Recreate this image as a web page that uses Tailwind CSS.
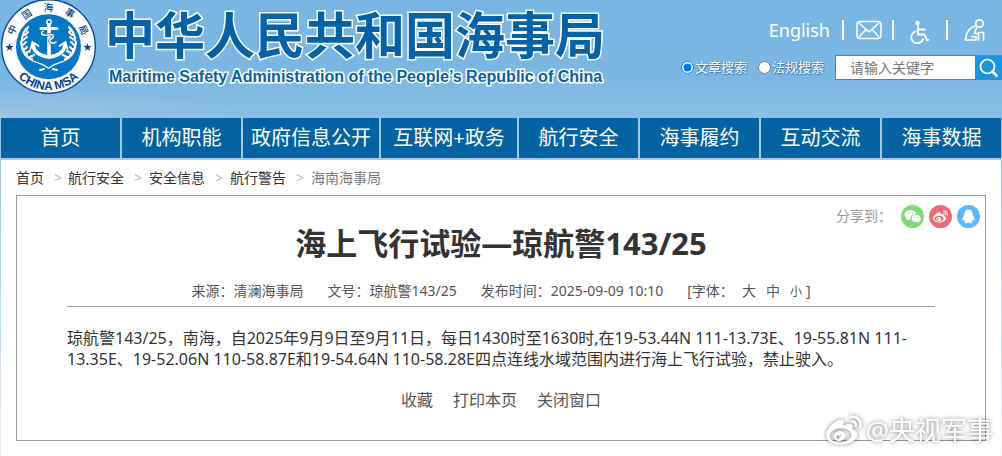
<!DOCTYPE html>
<html lang="zh-CN">
<head>
<meta charset="utf-8">
<meta name="viewport" content="width=device-width, initial-scale=1">
<title>海上飞行试验—琼航警143/25</title>
<script src="https://cdn.jsdelivr.net/npm/@tailwindcss/browser@4"></script>
</head>
<body class="bg-white font-['Noto_Sans','Noto_Sans_CJK_SC',sans-serif] text-[#333]">
<div class="relative min-h-screen bg-linear-to-b from-[#76b4e1] from-0% via-[#a9cfee] via-160px to-[#eeeeee] to-320px px-px">
  <header class="-mx-px flex h-[118px] justify-between bg-[radial-gradient(ellipse_at_0%_100%,#9cc3df_0%,transparent_18%),linear-gradient(180deg,#78b5e2_0%,#7bb6e2_65%,#8abfe6_100%)]">
    <a href="#" class="flex items-start" aria-label="中华人民共和国海事局">
      <svg class="h-24 w-[97px] shrink-0" viewBox="0 0 97 96" aria-hidden="true">
        <defs><path id="arc" d="M5.500 47A43 43 0 0 0 91.500 47"/></defs>
        <circle cx="48.500" cy="46.500" r="46.800" fill="#fff" stroke="#0a4a9c" stroke-width="1.400"/>
        <circle cx="48.500" cy="46.800" r="32.500" fill="#0878c4"/>
        <g fill="#0a3f8f" font-family="Noto Sans CJK SC" font-size="9.500" font-weight="500" text-anchor="middle">
          <text transform="translate(12.500 30) rotate(-65)" y="3">中</text>
          <text transform="translate(27 14.500) rotate(-34)" y="3">国</text>
          <text transform="translate(48.500 8)" y="3">海</text>
          <text transform="translate(69.500 13.500) rotate(32)" y="3">事</text>
          <text transform="translate(83 30) rotate(63)" y="3">局</text>
        </g>
        <text fill="#0a3f8f" font-family="Liberation Sans" font-size="12" font-weight="700" text-anchor="middle"><textPath href="#arc" startOffset="50%">CHINA MSA</textPath></text>
        <g fill="#0a3f8f">
          <path id="star" d="M9.500 43l1 3h3.200l-2.600 1.900 1 3.100-2.600-1.900L6.900 51l1-3.100L5.300 46h3.200z"/>
          <use href="#star" x="78"/>
        </g>
        <g fill="none" stroke="#fff" stroke-linecap="round">
          <circle cx="49" cy="22" r="2.200" stroke-width="1.500"/>
          <path d="M41 28.500h16" stroke-width="3"/>
          <path d="M49 25v32" stroke-width="3.600"/>
          <path d="M33 45c1 7 7 11 16 12 9-1 15-5 16-12" stroke-width="3.600"/>
          <path d="M30.500 49l2-7 6 4M67.500 49l-2-7-6 4" stroke-width="1.800"/>
          <path d="M43 31c-4 3 1 5 5 4 6-2 7 2 3 4s2 6 5 3" stroke="#0878c4" stroke-width="3"/>
          <path d="M43 31c-4 3 1 5 5 4 6-2 7 2 3 4s2 6 5 3" stroke-width="1.500"/>
          <path d="M26 28c-8 13-6 26 5 32 5 3 11 3 17 8M71 28c8 13 6 26-5 32-5 3-11 3-17 8" stroke-width="1.200"/>
          <path d="M28 27l-2 4M24 32l-1 4M22 37l0 4M21 42l1 4M22 47l2 4M24 52l3 3M28 57l4 2M28 32l-3 3M27 37l-4 3M26 42l-3 3M27 47l-3 3M30 51l-4 2M34 55l-4 2M69 27l2 4M73 32l1 4M75 37v4M76 42l-1 4M75 47l-2 4M73 52l-3 3M69 57l-4 2M69 32l3 3M70 37l4 3M71 42l3 3M70 47l3 3M67 51l4 2M63 55l4 2" stroke-width="2"/>
          <path d="M40 70l4-1M57 70l-4-1" stroke-width="2"/>
        </g>
      </svg>
      <span class="flex flex-col pt-[9px] pl-2 text-[#0562a6] [-webkit-text-stroke:3px_white] [paint-order:stroke_fill]">
        <span class="text-[50px] leading-[52px] font-bold whitespace-nowrap">中华人民共和国海事局</span>
        <span class="mt-1 pl-1 font-['Liberation_Sans',sans-serif] text-base leading-6 font-bold whitespace-nowrap">Maritime Safety Administration of the People’s Republic of China</span>
      </span>
    </a>
    <div class="flex flex-col items-end pt-4">
      <div class="flex items-center pr-4 text-white">
        <a href="#" class="text-lg leading-6">English</a>
        <span class="ml-3 h-5 w-0.5 bg-white"></span>
        <a href="#" class="ml-3" aria-label="邮箱">
          <svg class="h-5 w-[26px]" viewBox="0 0 26 20" fill="none" stroke="#fff" stroke-width="1.500" stroke-linejoin="round"><rect x="1" y="1.500" width="24" height="17" rx="3"/><path d="M3 3l10 9L23 3M3 17l7-7.500M23 17l-7-7.500"/></svg>
        </a>
        <span class="ml-2.5 h-5 w-0.5 bg-white"></span>
        <a href="#" class="ml-4" aria-label="无障碍">
          <svg class="mt-1 h-6 w-5" viewBox="0 0 20 24" fill="none" stroke="#fff" stroke-width="1.800" stroke-linecap="round" stroke-linejoin="round"><circle cx="7.500" cy="3" r="1.300" fill="#fff"/><path d="M8 6v8.500h6.500l2.500 6 1.500-.8M8 9.500h7M5.500 11.500a6 6 0 1 0 7.500 7.500"/></svg>
        </a>
        <span class="ml-4 h-5 w-0.5 bg-white"></span>
        <a href="#" class="ml-4" aria-label="长者助手">
          <svg class="h-6 w-[22px]" viewBox="0 0 22 24" fill="none" stroke="#fff" stroke-width="1.700" stroke-linecap="round" stroke-linejoin="round"><circle cx="15.500" cy="5.500" r="3.700"/><path d="M11 8C6 9.500 2 14 1.500 22h10.500v-3.500l-4 .2M12.500 10l-2 5 4 1v6M15 14.500h4.500V22"/></svg>
        </a>
      </div>
      <form class="mt-[11px] flex items-center" onsubmit="return false">
        <label class="flex items-center gap-px text-[13px] text-white [text-shadow:1px_1px_1px_#2b6da6,-1px_0_1px_#4b8cc2]"><input type="radio" name="kind" checked class="size-[13px]">文章搜索</label>
        <label class="ml-[11px] flex items-center gap-px text-[13px] text-white [text-shadow:1px_1px_1px_#2b6da6,-1px_0_1px_#4b8cc2]"><input type="radio" name="kind" class="size-[13px]">法规搜索</label>
        <input type="text" aria-label="关键字" placeholder="请输入关键字" class="ml-[11px] h-[25px] w-[141px] border border-[#767676] bg-white pl-3.5 text-sm text-[#333] placeholder:text-[#757575]">
        <button type="submit" aria-label="搜索" class="flex h-[25px] w-[26px] items-center justify-center bg-[#1b95e0]">
          <svg class="size-5" viewBox="0 0 20 20" fill="none" stroke="#fff" stroke-width="1.700" stroke-linecap="round"><circle cx="8.500" cy="8.500" r="7"/><path d="M13.500 13.500l4 4" stroke-width="2.800"/></svg>
        </button>
      </form>
    </div>
  </header>

  <nav class="grid grid-cols-[119fr_119fr_136fr_136fr_119fr_119fr_119fr_119fr] gap-x-0.5 border-b-2 border-[#a5cae8] bg-[#a5cae8] text-center text-xl leading-10 whitespace-nowrap text-white">
    <a href="#" class="bg-[#0562a3]">首页</a>
    <a href="#" class="bg-[#0562a3]">机构职能</a>
    <a href="#" class="bg-[#0562a3]">政府信息公开</a>
    <a href="#" class="bg-[#0562a3]">互联网+政务</a>
    <a href="#" class="bg-[#0562a3]">航行安全</a>
    <a href="#" class="bg-[#0562a3]">海事履约</a>
    <a href="#" class="bg-[#0562a3]">互动交流</a>
    <a href="#" class="bg-[#0562a3]">海事数据</a>
  </nav>

  <main class="bg-white px-[15px] pb-[15px]">
    <nav aria-label="面包屑" class="flex h-[35px] items-center text-sm">
      <a href="#">首页</a><span class="w-6 pl-2.5 text-[#bbb]">&gt;</span>
      <a href="#">航行安全</a><span class="w-[25px] pl-2.5 text-[#bbb]">&gt;</span>
      <a href="#">安全信息</a><span class="w-[25px] pl-2.5 text-[#bbb]">&gt;</span>
      <a href="#">航行警告</a><span class="w-[25px] pl-2.5 text-[#bbb]">&gt;</span>
      <span class="text-[#777]">海南海事局</span>
    </nav>
    <article class="border border-[#999] px-[50px] pt-2 pb-7">
      <div class="-mr-[45px] flex h-6 items-center justify-end gap-[5px] text-sm text-[#999]">
        <span class="mr-1">分享到：</span>
        <a href="#" aria-label="微信"><svg class="size-[23px]" viewBox="0 0 23 23"><circle cx="11.500" cy="11.500" r="11.500" fill="#7fd975"/><path d="M9.500 5C6 5 3.500 7.200 3.500 9.800c0 1.600.9 2.900 2.200 3.800l-.5 1.800 2.100-1 2.200.4C9 11.500 11.600 9 15.200 9 14.800 6.700 12.500 5 9.500 5z" fill="#fff"/><path d="M19.800 13.500c0-2.200-2.100-3.800-4.600-3.800s-4.600 1.600-4.600 3.800 2.100 3.800 4.600 3.800l1.700-.3 1.600.9-.4-1.500c1-.7 1.700-1.700 1.700-2.900z" fill="#fff"/><g fill="#7fd975"><circle cx="7.500" cy="8.300" r=".8"/><circle cx="11.300" cy="8.300" r=".8"/><circle cx="13.700" cy="12.500" r=".6"/><circle cx="16.700" cy="12.500" r=".6"/></g></svg></a>
        <a href="#" aria-label="微博"><svg class="size-[23px]" viewBox="0 0 23 23"><circle cx="11.500" cy="11.500" r="11.500" fill="#ea6b72"/><use href="#weibo" x="4" y="4" width="15" height="15" fill="#fff"/></svg></a>
        <a href="#" aria-label="QQ"><svg class="size-[23px]" viewBox="0 0 23 23"><circle cx="11.500" cy="11.500" r="11.500" fill="#5eb5fa"/><path d="M11.500 4.500c-2.700 0-4 1.900-4 4.300 0 1.800-2.300 3.600-2.300 6.200 0 1 .8.700 1.700-.5.200.9.700 1.600 1.300 2.100-.9.400-1 1.600.8 1.600 1.200 0 2-.3 2.500-.8.500.5 1.300.8 2.500.8 1.800 0 1.700-1.200.8-1.600.6-.5 1.100-1.200 1.300-2.100.9 1.200 1.700 1.500 1.700.5 0-2.600-2.300-4.400-2.300-6.200 0-2.400-1.300-4.300-4-4.300z" fill="#fff"/></svg></a>
      </div>
      <h1 class="-mt-1 text-center text-[31px] leading-[38px] font-bold">海上飞行试验—琼航警143/25</h1>
      <div class="mt-[19px] flex h-[26px] justify-center gap-6 border-b border-[#999] text-sm text-[#555]">
        <span>来源：清澜海事局</span>
        <span>文号：琼航警143/25</span>
        <span>发布时间：2025-09-09 10:10</span>
        <span class="flex items-baseline">[字体：<button type="button" class="ml-2">大</button><button type="button" class="ml-2.5">中</button><button type="button" class="mr-1 ml-2.5 text-xs">小</button>]</span>
      </div>
      <p class="mt-[21px] text-base leading-[21px]">琼航警143/25，南海，自2025年9月9日至9月11日，每日1430时至1630时,在19-53.44N 111-13.73E、19-55.81N 111-13.35E、19-52.06N 110-58.87E和19-54.64N 110-58.28E四点连线水域范围内进行海上飞行试验，禁止驶入。</p>
      <div class="mt-[18px] flex justify-center gap-5 text-base text-[#555]">
        <button type="button">收藏</button>
        <button type="button">打印本页</button>
        <button type="button">关闭窗口</button>
      </div>
    </article>
  </main>

  <div class="absolute right-[9px] bottom-2 flex items-center gap-1 text-[26px] leading-9 text-white drop-shadow-[0_0_2px_rgba(0,0,0,0.5)]">
    <svg class="size-9" viewBox="0 0 24 24" fill="currentColor" aria-hidden="true"><symbol id="weibo" viewBox="0 0 24 24"><path d="M10.098 20.323c-3.977.391-7.414-1.406-7.672-4.020-.259-2.609 2.759-5.047 6.740-5.441 3.979-.394 7.413 1.404 7.671 4.018.259 2.600-2.759 5.049-6.737 5.439zM9.050 17.219c-.384.616-1.208.884-1.829.602-.612-.279-.793-.991-.406-1.593.379-.595 1.176-.861 1.793-.601.622.263.820.972.442 1.592zm1.270-1.627c-.141.237-.449.353-.689.253-.236-.090-.313-.361-.177-.586.138-.227.436-.346.672-.240.239.090.315.360.180.601zm.176-2.719c-1.893-.493-4.033.450-4.857 2.118-.836 1.704-.026 3.591 1.886 4.210 1.983.640 4.318-.341 5.132-2.179.800-1.793-.201-3.642-2.161-4.149zm7.563-1.224c-.346-.105-.570-.180-.405-.615.375-.977.420-1.804 0-2.404-.781-1.112-2.915-1.053-5.364-.030 0 0-.766.331-.571-.271.376-1.217.315-2.224-.270-2.809-1.338-1.337-4.869.045-7.888 3.080C1.309 10.870 0 13.273 0 15.348c0 3.981 5.099 6.395 10.086 6.395 6.536 0 10.888-3.801 10.888-6.820 0-1.822-1.547-2.854-2.915-3.284zm1.908-5.092c-.766-.856-1.908-1.187-2.960-.962-.436.090-.706.511-.616.932.090.420.511.691.932.602.511-.105 1.067.044 1.442.465.376.421.466.977.316 1.473-.136.406.089.856.510.992.405.119.857-.105.992-.512.330-1.021.120-2.178-.646-3.035zm2.418-2.195c-1.576-1.757-3.905-2.419-6.054-1.968-.496.104-.812.587-.706 1.081.104.496.586.813 1.082.707 1.532-.331 3.185.150 4.296 1.383 1.112 1.246 1.429 2.943.947 4.416-.165.480.106 1.007.586 1.157.479.165.991-.104 1.157-.586.675-2.088.241-4.478-1.338-6.235z"/></symbol><use href="#weibo" width="24" height="24"/></svg>
    <span>@央视军事</span>
  </div>
</div>
</body>
</html>
